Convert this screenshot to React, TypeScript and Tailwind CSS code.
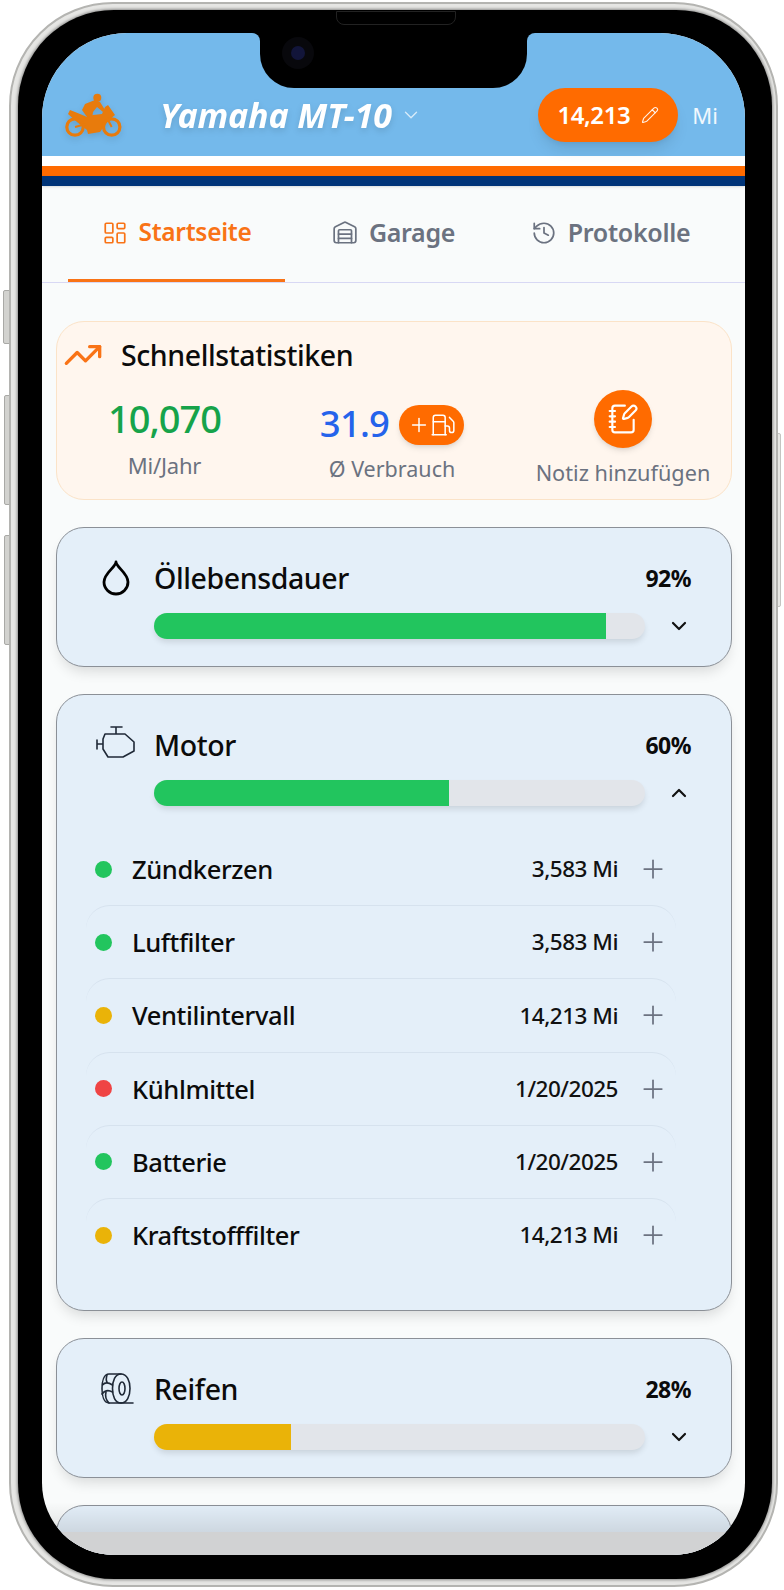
import { LayoutDashboard, Warehouse, History, TrendingUp, Pencil, ChevronDown, ChevronUp, Plus, Fuel, NotebookPen } from "lucide-react";

const font = "font-['Noto_Sans','Liberation_Sans',sans-serif]";

function Moto() {
  return (
    <svg width="60" height="46" viewBox="0 0 60 46" fill="none" className="drop-shadow-md shrink-0">
      <circle cx="33.3" cy="5.7" r="4" fill="#e87b0c" />
      <path d="M21 12 L31 8 L36 10 L41 18 L39 20 L33 15 L29 20 L28 27 L26 35 L21 33 L23 25 L18 18 Z" fill="#e87b0c" />
      <path d="M29 23 L38 22 L41 15 L44 13 L51 23 L46 27 L41 33 L36 40 L24 42 L23 38 L13 30 L4 22 L6 18 L16 22 L23 25 Z" fill="#e87b0c" />
      <circle cx="11" cy="35" r="8.2" stroke="#e87b0c" strokeWidth="3.2" />
      <circle cx="47.7" cy="35" r="8.2" stroke="#e87b0c" strokeWidth="3.2" />
      <path d="M11 35 L22 32 M47.7 35 L43 26" stroke="#e87b0c" strokeWidth="2" />
    </svg>
  );
}

function Drop() {
  return (
    <svg width="34" height="38" viewBox="0 0 34 38" fill="none" stroke="#000" strokeWidth="2.8" strokeLinejoin="round" className="mr-[1px]">
      <path d="M17 3 C17 8 5 14 5 23 A12 12 0 0 0 29 23 C29 14 17 8 17 3 Z" />
    </svg>
  );
}

function Engine() {
  return (
    <svg width="40" height="34" viewBox="0 0 40 34" fill="none" stroke="#1f2937" strokeWidth="1.6" strokeLinejoin="round" strokeLinecap="round" className="-mt-1 -mr-[1px]">
      <path d="M16 1 H27 M21 1 V8 M10 8 H30 L39 16 V25 L28 31 H13 L8 23 V13 Z M2 18 H8 M2 14 V23" />
    </svg>
  );
}

function Tire() {
  return (
    <svg width="34" height="34" viewBox="0 0 34 34" fill="none" stroke="#1f2937" strokeWidth="1.6" strokeLinejoin="round" strokeLinecap="round">
      <path d="M9 2 H21 C27 2 30 9 30 16.5 C30 24 27 31 21 31 H9 C4 31 2 24 2 16.5 C2 9 4 2 9 2 Z" />
      <path d="M21 2 C15 2 12.5 9 12.5 16.5 C12.5 24 15 31 21 31" />
      <ellipse cx="22" cy="16.5" rx="3" ry="6.5" />
      <path d="M21 31 H33 M2.5 13 C5 10 8 10 12.5 13 M2 22 C5 18 9 18 12.5 20 M7 3 C6 6 6 9 7.5 11 M6 20 C5 24 6 28 9 31" />
    </svg>
  );
}

function Bar({ pct, color }: { pct: number; color: string }) {
  return (
    <div className="flex-1 h-[26px] rounded-full bg-[#e2e5ea] overflow-hidden shadow-[0_4px_6px_-1px_rgba(0,0,0,0.12)]">
      <div className={`h-full ${color}`} style={{ width: `${pct}%` }} />
    </div>
  );
}

function Row({ dot, name, value, first }: { dot: string; name: string; value: string; first?: boolean }) {
  return (
    <div className={`h-[73.2px] flex items-center pl-[9px] pr-[8px] rounded-[24px] border-t ${first ? "border-transparent" : "border-[#d6e2ee]"}`}>
      <div className={`w-[17px] h-[17px] rounded-full ${dot}`} />
      <div className="ml-[20px] text-[25.5px] font-medium text-[#0b0b0b] tracking-[-0.4px] flex-1">{name}</div>
      <div className="text-[22.5px] font-medium text-[#111] tracking-[-0.5px]">{value}</div>
      <Plus size={30} strokeWidth={1.4} className="ml-[20px] text-[#6b7280]" />
    </div>
  );
}

function Card({ icon, title, pct, color, open, children }: { icon: React.ReactNode; title: string; pct: number; color: string; open?: boolean; children?: React.ReactNode }) {
  return (
    <div className="rounded-[28px] border border-[#8b9097] bg-[#e4eff9] pt-[30px] pb-[27px] shadow-[0_8px_14px_-4px_rgba(0,0,0,0.14)]">
      <div className="flex items-center h-10 pr-[40px]">
        <div className="w-[97px] flex justify-end pr-[20px] shrink-0">{icon}</div>
        <div className="flex-1 text-[28.5px] font-medium text-[#0b0b0b] tracking-[-0.4px]">{title}</div>
        <div className="text-[23px] font-bold text-[#0b0b0b] tracking-[-0.5px]">{pct}%</div>
      </div>
      <div className="flex items-center mt-[15px] pl-[97px] pr-[40px]">
        <Bar pct={pct} color={color} />
        <div className="w-[46px] flex justify-end">
          {open ? <ChevronUp size={24} strokeWidth={2.2} className="text-[#111]" /> : <ChevronDown size={24} strokeWidth={2.2} className="text-[#111]" />}
        </div>
      </div>
      {children}
    </div>
  );
}

export default function App() {
  return (
    <div className={`relative w-[784px] h-[1590px] bg-white overflow-hidden ${font}`}>
      {/* side buttons */}
      <div className="absolute left-[3px] top-[290px] w-[7px] h-[54px] rounded-l-[2px] border border-[#a9a9a6] bg-[#d2d2cf]" />
      <div className="absolute left-[4px] top-[395px] w-[6px] h-[110px] rounded-l-[2px] border border-[#a9a9a6] bg-[#d2d2cf]" />
      <div className="absolute left-[4px] top-[535px] w-[6px] h-[110px] rounded-l-[2px] border border-[#a9a9a6] bg-[#d2d2cf]" />
      <div className="absolute left-[777px] top-[433px] w-[4px] h-[174px] rounded-r-[2px] border border-[#c4c4c1] bg-[#e8e8e5]" />

      {/* device */}
      <div className="absolute left-[9px] top-[2px] w-[769px] h-[1585px] rounded-[104px] bg-[#e6e6e4] border-[2px] border-[#b4b4b1] pl-[7px] pr-[4px] pt-[6px] pb-[6px]">
        <div className="w-full h-full rounded-[96px] bg-black shadow-[0_0_3px_1px_rgba(0,0,0,0.4)] pl-[24px] pr-[27px] pt-[23px] pb-[24px]">
          <div className="relative w-[703px] h-[1522px] rounded-t-[85px] rounded-b-[72px] overflow-hidden bg-[#f9fbfb]">
            {/* header */}
            <div className="h-[123px] bg-[#74b9eb] flex items-center pt-[41px] pl-[22px] pr-[27px]">
              <Moto />
              <div className="ml-[36px] mt-[1px] text-[34px] font-bold italic text-white tracking-[-0.1px] drop-shadow-md">Yamaha MT-10</div>
              <ChevronDown size={22} strokeWidth={1.5} className="ml-[8px] text-white/70" />
              <div className="ml-auto w-[140px] h-[54px] rounded-full bg-[#ff6b00] flex items-center justify-center shadow-lg">
                <span className="text-[24px] font-semibold text-white tracking-[-0.4px]">14,213</span>
                <Pencil size={18} strokeWidth={1.5} className="ml-[11px] text-white/90" />
              </div>
              <div className="ml-[14px] text-[22px] text-white/90">Mi</div>
            </div>
            <div className="h-[10px] bg-white" />
            <div className="h-[10px] bg-[#ff6b00]" />
            <div className="h-[10px] bg-[#003478] shadow-sm" />

            {/* tabs */}
            <div className="h-[97px] border-b border-[#d8d8f4] px-[26px] flex">
              <div className="w-[217px] flex items-center justify-center gap-[11px] border-b-[3px] border-[#f97316] text-[#f97316]">
                <LayoutDashboard size={26} strokeWidth={1.6} />
                <span className="text-[24.5px] font-semibold tracking-[-0.3px]">Startseite</span>
              </div>
              <div className="w-[217px] flex items-center justify-center gap-[11px] text-[#6b7280] pb-[3px]">
                <Warehouse size={26} strokeWidth={1.6} />
                <span className="text-[25px] font-semibold tracking-[-0.3px]">Garage</span>
              </div>
              <div className="w-[217px] flex items-center justify-center gap-[11px] text-[#6b7280] pb-[3px]">
                <History size={26} strokeWidth={1.6} />
                <span className="text-[25px] font-semibold tracking-[-0.3px]">Protokolle</span>
              </div>
            </div>

            {/* content */}
            <div className="pl-[14px] pr-[13px] pt-[38px] flex flex-col gap-[27px]">
              <div className="h-[179px] rounded-[28px] border border-[#fbe3c8] bg-[#fff6ee]">
                <div className="flex items-center h-[40px] mt-[13px] pl-[6px]">
                  <TrendingUp size={40} strokeWidth={2} className="text-[#f97316]" />
                  <div className="ml-[18px] text-[28.5px] font-medium text-[#0b0b0b] tracking-[-0.4px]">Schnellstatistiken</div>
                </div>
                <div className="grid grid-cols-[215px_240px_222px] mt-[18px]">
                  <div className="flex flex-col items-center">
                    <div className="text-[38px] leading-[50px] font-medium text-[#16a34a] tracking-[-1px]">10,070</div>
                    <div className="text-[22px] mt-[6px] text-[#6b7280] tracking-[-0.2px]">Mi/Jahr</div>
                  </div>
                  <div className="flex flex-col items-center">
                    <div className="flex items-center h-[50px] mt-[5px] gap-[10px]">
                      <div className="text-[36.5px] font-medium text-[#2563eb] tracking-[-0.8px]">31.9</div>
                      <div className="w-[65px] h-[40px] mt-[3px] rounded-full bg-[#ff6b00] flex items-center justify-center text-white shadow-md">
                        <Plus size={22} strokeWidth={1.6} />
                        <Fuel size={26} strokeWidth={1.4} />
                      </div>
                    </div>
                    <div className="text-[21.5px] mt-[5px] text-[#6b7280]">Ø Verbrauch</div>
                  </div>
                  <div className="flex flex-col items-center">
                    <div className="w-[58px] h-[58px] rounded-full bg-[#ff6b00] flex items-center justify-center text-white shadow-md mt-[-3px]">
                      <NotebookPen size={32} strokeWidth={1.6} />
                    </div>
                    <div className="text-[21.7px] mt-[9px] text-[#6b7280] whitespace-nowrap">Notiz hinzufügen</div>
                  </div>
                </div>
              </div>

              <Card icon={<Drop />} title="Öllebensdauer" pct={92} color="bg-[#22c55e]" />

              <Card icon={<Engine />} title="Motor" pct={60} color="bg-[#22c55e]" open>
                <div className="mt-[26px] mb-[12px] ml-[29px] mr-[55px]">
                  <Row first dot="bg-[#22c55e]" name="Zündkerzen" value="3,583 Mi" />
                  <Row dot="bg-[#22c55e]" name="Luftfilter" value="3,583 Mi" />
                  <Row dot="bg-[#eab308]" name="Ventilintervall" value="14,213 Mi" />
                  <Row dot="bg-[#ef4444]" name="Kühlmittel" value="1/20/2025" />
                  <Row dot="bg-[#22c55e]" name="Batterie" value="1/20/2025" />
                  <Row dot="bg-[#eab308]" name="Kraftstofffilter" value="14,213 Mi" />
                </div>
              </Card>

              <Card icon={<Tire />} title="Reifen" pct={28} color="bg-[#eab308]" />

              <div className="h-[140px] rounded-[28px] border border-[#8b9097] bg-[#e4eff9]" />
            </div>

            {/* notch */}
            <div className="absolute left-[218px] top-0 w-[267px] h-[55px] bg-black rounded-b-[34px]" />
            <div className="absolute left-[208px] top-0 w-[10px] h-[10px] bg-black">
              <div className="w-full h-full rounded-tr-[8px] bg-[#74b9eb]" />
            </div>
            <div className="absolute left-[485px] top-0 w-[10px] h-[10px] bg-black">
              <div className="w-full h-full rounded-tl-[8px] bg-[#74b9eb]" />
            </div>
            <div className="absolute left-[240px] top-[4px] w-[32px] h-[32px] rounded-full bg-[#08080c] flex items-center justify-center">
              <div className="w-[14px] h-[14px] rounded-full bg-[#12153a]" />
            </div>

            {/* bottom fade */}
            <div className="absolute left-0 right-0 bottom-[23px] h-[30px] bg-gradient-to-b from-transparent to-black/10" />
            <div className="absolute left-0 right-0 bottom-0 h-[23px] bg-[#d1d2d3]" />
          </div>
        </div>
      </div>

      {/* speaker */}
      <div className="absolute left-[336px] top-[11px] w-[120px] h-[14px] rounded-b-[8px] bg-black border border-[#222]" />
    </div>
  );
}
